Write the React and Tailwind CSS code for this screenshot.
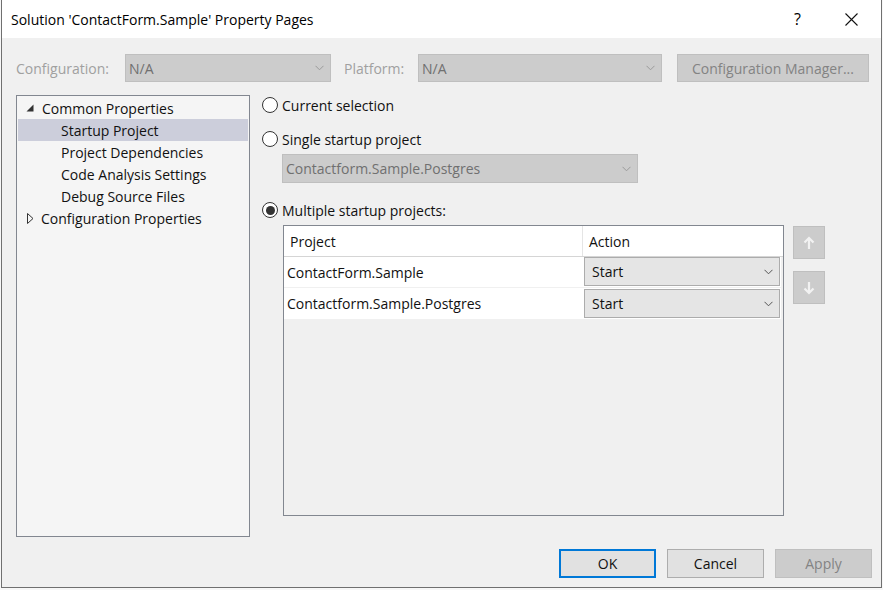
import React from "react";

function Chevron({ color = "#8a8a8a" }) {
  return (
    <svg width="9" height="6" viewBox="0 0 9 6">
      <path d="M0.5 0.8 L4.5 4.8 L8.5 0.8" stroke={color} strokeWidth="1" fill="none" />
    </svg>
  );
}

function Radio({ checked, label }) {
  return (
    <div className="flex items-center h-[22px]">
      <div className="w-[16px] h-[16px] rounded-full border border-[#333333] bg-white flex items-center justify-center">
        {checked && <div className="w-[9px] h-[9px] rounded-full bg-[#333333]" />}
      </div>
      <span className="ml-[4px] text-[14px] text-[#111111]">{label}</span>
    </div>
  );
}

function RowSelect() {
  return (
    <div className="h-[29px] w-[196px] bg-[#e5e5e5] border border-[#acacac] flex items-center justify-between pl-[7px] pr-[6px]">
      <span className="text-[14px] text-[#111111]">Start</span>
      <Chevron color="#555555" />
    </div>
  );
}

function ArrowBtn({ up }) {
  return (
    <div className="w-[32px] h-[33px] bg-[#cccccc] border border-[#bfbfbf] flex items-center justify-center">
      <svg width="12" height="14" viewBox="0 0 12 14">
        {up ? (
          <path d="M6 13 V2 M1.5 6.5 L6 2 L10.5 6.5" stroke="#f2f2f2" strokeWidth="2.2" fill="none" />
        ) : (
          <path d="M6 1 V12 M1.5 7.5 L6 12 L10.5 7.5" stroke="#f2f2f2" strokeWidth="2.2" fill="none" />
        )}
      </svg>
    </div>
  );
}

export default function App() {
  return (
    <div className="w-[883px] h-[590px] bg-[#f7f7f7] font-['Open_Sans',sans-serif] overflow-hidden">
      <div className="ml-[1px] w-[881px] h-[588px] border-l border-r border-b border-[#707070] flex flex-col bg-[#f0f0f0]">
        {/* Title bar */}
        <div className="h-[38px] bg-white flex items-center shrink-0">
          <span className="ml-[9px] text-[14px] text-black">Solution 'ContactForm.Sample' Property Pages</span>
          <div className="flex-1" />
          <span className="text-[16px] text-black mr-[44px]">?</span>
          <svg width="13" height="13" viewBox="0 0 13 13" className="mr-[23px]">
            <path d="M0.5 0.5 L12.5 12.5 M12.5 0.5 L0.5 12.5" stroke="#111" strokeWidth="1.1" />
          </svg>
        </div>

        {/* Config row */}
        <div className="mt-[16px] ml-[14px] flex items-center h-[28px]">
          <span className="w-[109px] text-[14px] text-[#a0a0a0]">Configuration:</span>
          <div className="w-[206px] h-[28px] bg-[#cccccc] border border-[#bfbfbf] flex items-center justify-between pl-[3px] pr-[6px]">
            <span className="text-[14px] text-[#707070]">N/A</span>
            <Chevron color="#9a9a9a" />
          </div>
          <span className="ml-[13px] w-[74px] text-[14px] text-[#a0a0a0]">Platform:</span>
          <div className="w-[244px] h-[28px] bg-[#cccccc] border border-[#bfbfbf] flex items-center justify-between pl-[3px] pr-[6px]">
            <span className="text-[14px] text-[#707070]">N/A</span>
            <Chevron color="#9a9a9a" />
          </div>
          <div className="ml-[15px] w-[192px] h-[28px] bg-[#cccccc] border border-[#bfbfbf] flex items-center justify-center">
            <span className="text-[14px] text-[#838383]">Configuration Manager...</span>
          </div>
        </div>

        {/* Main */}
        <div className="mt-[13px] ml-[14px] flex">
          {/* Tree */}
          <div className="w-[234px] h-[442px] border border-[#828790] bg-[#f5f5f5] p-[1px] text-[14px] text-[#111111]">
            <div className="h-[22px] flex items-center">
              <svg width="8" height="8" viewBox="0 0 8 8" className="ml-[8px]">
                <path d="M7.5 0.5 V7.5 H0.5 Z" fill="#333" />
              </svg>
              <span className="ml-[8px]">Common Properties</span>
            </div>
            <div className="h-[22px] flex items-center bg-[#cccedb] pl-[43px]">Startup Project</div>
            <div className="h-[22px] flex items-center pl-[43px]">Project Dependencies</div>
            <div className="h-[22px] flex items-center pl-[43px]">Code Analysis Settings</div>
            <div className="h-[22px] flex items-center pl-[43px]">Debug Source Files</div>
            <div className="h-[22px] flex items-center">
              <svg width="7" height="11" viewBox="0 0 7 11" className="ml-[9px]">
                <path d="M0.5 0.5 L6 5.5 L0.5 10.5 Z" fill="none" stroke="#333" />
              </svg>
              <span className="ml-[7px]">Configuration Properties</span>
            </div>
          </div>

          {/* Right */}
          <div className="ml-[12px] -mt-[1px] flex flex-col">
            <Radio label="Current selection" />
            <div className="mt-[12px]">
              <Radio label="Single startup project" />
            </div>
            <div className="mt-[4px] ml-[20px] w-[356px] h-[29px] bg-[#cccccc] border border-[#bfbfbf] flex items-center justify-between pl-[3px] pr-[6px]">
              <span className="text-[14px] text-[#707070]">Contactform.Sample.Postgres</span>
              <Chevron color="#9a9a9a" />
            </div>
            <div className="mt-[16px]">
              <Radio checked label="Multiple startup projects:" />
            </div>
            <div className="mt-[4px] ml-[21px] flex">
              <div className="w-[501px] h-[291px] border border-[#828790] bg-[#f0f0f0] flex flex-col">
                <div className="h-[31px] bg-white border-b border-[#d5d5d5] flex text-[14px] text-[#111111]">
                  <div className="w-[299px] border-r border-[#e5e5e5] pl-[6px] flex items-center">Project</div>
                  <div className="pl-[6px] flex items-center">Action</div>
                </div>
                <div className="h-[31px] w-[497px] bg-white border-b border-[#f0f0f0] flex">
                  <div className="w-[300px] pl-[3px] flex items-center text-[14px] text-[#111111]">ContactForm.Sample</div>
                  <div><RowSelect /></div>
                </div>
                <div className="h-[31px] w-[497px] bg-white flex items-center">
                  <div className="w-[300px] pl-[3px] flex items-center text-[14px] text-[#111111]">Contactform.Sample.Postgres</div>
                  <RowSelect />
                </div>
              </div>
              <div className="ml-[9px] flex flex-col mt-[1px]">
                <ArrowBtn up />
                <div className="mt-[12px]">
                  <ArrowBtn />
                </div>
              </div>
            </div>
          </div>
        </div>

        {/* Buttons */}
        <div className="mt-[12px] flex justify-end mr-[9px] gap-[11px] text-[14px]">
          <div className="w-[97px] h-[29px] bg-[#e1e1e1] border-2 border-[#0078d7] flex items-center justify-center text-[#111111]">OK</div>
          <div className="w-[97px] h-[29px] bg-[#e1e1e1] border border-[#adadad] flex items-center justify-center text-[#111111]">Cancel</div>
          <div className="w-[97px] h-[29px] bg-[#cccccc] border border-[#bfbfbf] flex items-center justify-center text-[#838383]">Apply</div>
        </div>
      </div>
    </div>
  );
}
